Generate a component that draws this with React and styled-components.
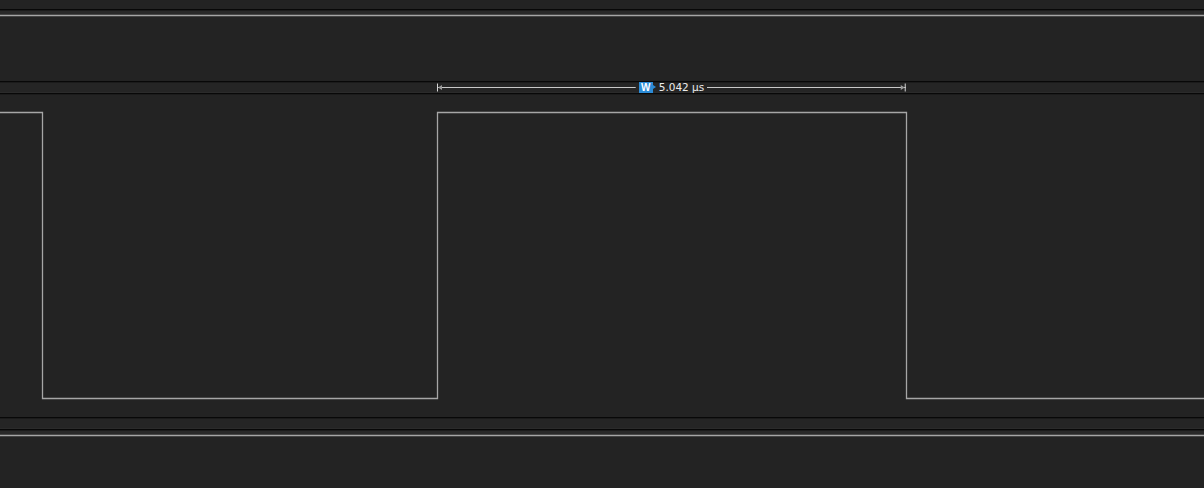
import React from "react";
import styled, { createGlobalStyle } from "styled-components";

const Global = createGlobalStyle`
  html, body { margin: 0; padding: 0; background: #232323; }
  body { font-family: "DejaVu Sans", "Liberation Sans", sans-serif; }
  #root { width: 1204px; height: 488px; overflow: hidden; }
`;

const Trace = styled.div`
  display: flex;
  flex-direction: column;
  width: 1204px;
  height: 488px;
  background: #232323;
`;

const Channel = styled.div`
  position: relative;
  height: ${(p) => p.$h}px;
  flex: none;
  background: ${(p) =>
    p.$band ? "linear-gradient(#292929 0, #292929 5px, #232323 5px)" : "#232323"};
  border-top: ${(p) => (p.$first ? "none" : "1px solid #080808")};
  box-shadow: ${(p) => (p.$first ? "none" : "inset 0 1px 0 #1b1b1b")};
  overflow: hidden;
`;

const Lane = styled.div`
  position: relative;
  height: ${(p) => p.$h}px;
  flex: none;
  background: #252525;
  border-top: 1px solid #080808;
  box-shadow: inset 0 1px 0 #1b1b1b, inset 0 -1px 0 #2b2b2b;
`;

const Wave = styled.svg`
  display: block;
  width: 1204px;
  height: 100%;
`;

const Measure = styled.div`
  position: absolute;
  top: 0;
  height: 11px;
  display: flex;
  align-items: center;
`;

const Segment = styled.div`
  flex: 1;
  height: 11px;
  & > svg {
    display: block;
    overflow: visible;
  }
`;

const Label = styled.div`
  display: flex;
  align-items: center;
  gap: 6px;
  padding: 0 3px;
  height: 11px;
`;

const Badge = styled.span`
  position: relative;
  display: inline-flex;
  align-items: center;
  justify-content: center;
  width: 14px;
  height: 11px;
  background: #2c8bd6;
  color: #ffffff;
  font-family: "Liberation Sans", sans-serif;
  font-weight: 700;
  font-size: 10px;
  line-height: 11px;
  &::after {
    content: "";
    position: absolute;
    right: -3px;
    top: 3px;
    border-left: 3px solid #2c8bd6;
    border-top: 2.5px solid transparent;
    border-bottom: 2.5px solid transparent;
  }
`;

const Value = styled.span`
  color: #ececec;
  font-family: "DejaVu Sans", sans-serif;
  font-size: 10.5px;
  line-height: 11px;
  white-space: nowrap;
`;

function RulerStart() {
  // left half of the measurement bar: end tick, arrow head, line
  return (
    <Segment>
      <svg width="100%" height="11">
        <line x1="0" y1="5.5" x2="100%" y2="5.5" stroke="#c8c8c8" strokeWidth="1" />
        <line x1="0.5" y1="1.5" x2="0.5" y2="9.5" stroke="#d4d4d4" strokeWidth="1" />
        <polygon points="1,5.5 5,3 5,8" fill="#9a9a9a" />
      </svg>
    </Segment>
  );
}

function RulerEnd() {
  // right half of the measurement bar
  return (
    <Segment>
      <svg width="100%" height="11">
        <line x1="0" y1="5.5" x2="100%" y2="5.5" stroke="#c8c8c8" strokeWidth="1" />
        <svg x="100%" overflow="visible">
          <polygon points="-1,5.5 -5,3 -5,8" fill="#9a9a9a" />
          <line x1="-0.5" y1="1.5" x2="-0.5" y2="9.5" stroke="#d4d4d4" strokeWidth="1" />
        </svg>
      </svg>
    </Segment>
  );
}

function Level({ y }) {
  return (
    <Wave>
      <line x1="0" y1={y + 0.5} x2="1204" y2={y + 0.5} stroke="#a6a6a6" strokeWidth="1.3" />
    </Wave>
  );
}

const edges = [42, 437, 906];
const pulse = `M0 18.5 H${edges[0] + 0.5} V304.5 H${edges[1] + 0.5} V18.5 H${edges[2] + 0.5} V304.5 H1204`;

export default function App() {
  return (
    <>
      <Global />
      <Trace>
        <Channel $h={9} $first />
        <Channel $h={71} $band>
          <Level y={5} />
        </Channel>
        <Lane $h={11}>
          <Measure style={{ left: 437, width: 469 }}>
            <RulerStart />
            <Label>
              <Badge>W</Badge>
              <Value>5.042 µs</Value>
            </Label>
            <RulerEnd />
          </Measure>
        </Lane>
        <Channel $h={323}>
          <Wave>
            <path d={pulse} fill="none" stroke="#a6a6a6" strokeWidth="1.3" />
          </Wave>
        </Channel>
        <Lane $h={11} />
        <Channel $h={58} $band>
          <Level y={5} />
        </Channel>
      </Trace>
    </>
  );
}
